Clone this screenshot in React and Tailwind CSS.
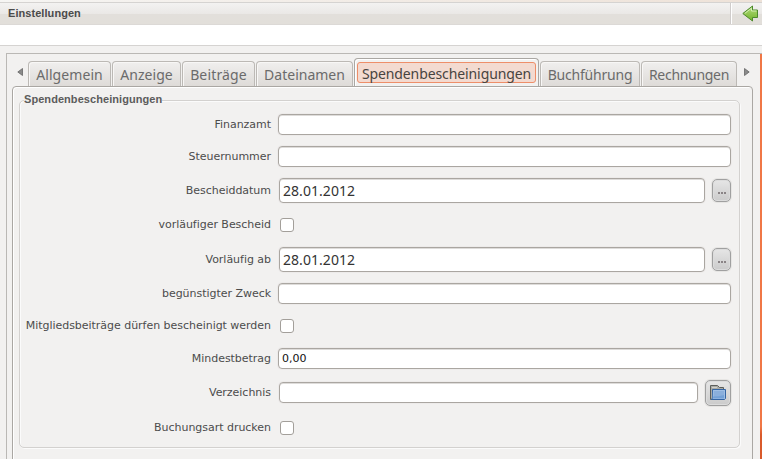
import React from "react";

const LABEL = "font-['DejaVu_Sans',sans-serif] text-[11px] leading-[14px] tracking-[-0.03px] text-[#4c4c4c] whitespace-nowrap";
const FIELD = "box-border rounded-[4px] border border-[#aaa6a1] bg-white shadow-[inset_0_1px_0_#dedcda,0_0_0_1px_#edebea] flex items-center";
const BUTTON = "box-border rounded-[5px] border border-[#a0a0a0] bg-linear-to-b from-[#e6e6e6] to-[#cbcbcb] shadow-[inset_0_0_0_1px_#dcdcdc,0_0_0_1px_#e6e5e3] flex items-center justify-center";

function Row({ label, className, children }) {
  return (
    <div className={"flex items-center " + className}>
      <div className={LABEL + " w-[251px] shrink-0 text-right"}>{label}</div>
      {children}
    </div>
  );
}

function TextField({ value }) {
  return (
    <div className={FIELD + " ml-[7px] h-[21px] w-[453px] pt-[1px] pl-[3px] font-['DejaVu_Sans',sans-serif] text-[11px] leading-[14px] text-[#111]"}>
      {value}
    </div>
  );
}

function DateField({ value }) {
  return (
    <>
      <div className={FIELD + " ml-[8px] h-[25px] w-[426px] pl-[3px] font-['Noto_Sans',sans-serif] text-[14px] text-[#333]"}>
        <span className="tracking-[0.05px]">{value}</span>
      </div>
      <button className={BUTTON + " ml-[7px] h-[23px] w-[19px]"}>
        <span className="flex gap-px pt-[5px]">
          <i className="size-[2px] bg-[#8a8486]" />
          <i className="size-[2px] bg-[#8a8486]" />
          <i className="size-[2px] bg-[#8a8486]" />
        </span>
      </button>
    </>
  );
}

function Check() {
  return <div className="ml-[9px] size-[14px] rounded-[3px] border border-[#a39f9a] bg-white" />;
}

function Tab({ className, text, children }) {
  return (
    <div
      className={
        "mr-[1px] flex h-[25px] shrink-0 items-center justify-center rounded-t-[4px] border border-b-0 border-[#bcb9b5] bg-linear-to-b from-[#f0efee] to-[#dedbd8] shadow-[inset_1px_1px_0_#f8f7f6] font-['Noto_Sans',sans-serif] text-[14px] whitespace-nowrap text-[#6b6b6b] " +
        className
      }
    >
      <span className={"mt-[1px] leading-[19px] " + text}>{children}</span>
    </div>
  );
}

function FolderIcon() {
  return (
    <svg width="18" height="18" viewBox="0 0 18 18">
      <path d="M1.5 15.5V1.5H8.5L10.5 3.5H14.5V6H3.5V15.5Z" fill="#a9aaa5" stroke="#5c5e5b" />
      <path d="M3 3.5H8" stroke="#cfd0cc" />
      <path d="M3.5 5.5H16.5V14.5L15.5 15.5H2.5L3.5 14Z" fill="#8aafdc" stroke="#3465a4" />
      <path d="M4.5 6.5H15.5V14.5H4Z" fill="none" stroke="#a8c5e8" strokeWidth=".7" />
      <path d="M4 12.5Q10 12.5 15 11V14.6H4Z" fill="#6497d4" opacity=".6" />
    </svg>
  );
}

export default function App() {
  return (
    <div className="h-[459px] w-[762px] overflow-hidden bg-[#f2f1f0]">
      <div className="h-[2px] bg-linear-to-r from-[#f6f5f3] to-[#eee2d8]" />
      <header className="flex h-[23px] items-stretch border-t border-b border-t-[#d5d3d1] border-b-[#dcd9d6] bg-[linear-gradient(#f3f2f1_0%,#eae8e6_52%,#e2dfdb_54%,#e2dfda_100%)]">
        <h1 className="flex-1 pl-[8px] font-['Liberation_Sans',sans-serif] text-[11px] leading-[21px] font-bold text-[#4b4b4b]">
          <span className="tracking-[0.06px]">Einstellungen</span>
        </h1>
        <div className="flex w-[32px] items-center border-l border-[#cfcccb] pl-[11px] shadow-[inset_1px_0_0_#fff]">
          <svg width="17" height="17" viewBox="0 0 17 17">
            <defs>
              <linearGradient id="leaf" x2="0" y2="1">
                <stop stopColor="#b3dc7c" />
                <stop offset="1" stopColor="#72b32b" />
              </linearGradient>
            </defs>
            <path d="M.8 8.5L10.5 1V5H15.5V12.5H10.5V16Z" fill="url(#leaf)" stroke="#4c8a2b" strokeLinejoin="round" />
            <path d="M2.8 8.4L9.5 3.2V6H14.5" fill="none" stroke="#d3edb1" />
          </svg>
        </div>
      </header>
      <div className="h-[20px] bg-white" />
      <div className="h-px bg-[#d5d3d1]" />
      <div className="h-[7px]" />
      <div className="ml-[6px] flex h-[406px] border-t border-l border-[#bab8b5]">
        <div className="w-[753px] shrink-0 pt-[5px]">
          <nav className="flex h-[27px] items-end">
            <div className="mr-[5px] mb-[10px] ml-[10px] w-[6px]">
              <svg width="6" height="8" viewBox="0 0 6 8"><path d="M5.5.5V7.5L.8 4Z" fill="#8b8b8b" stroke="#666" strokeWidth=".8" /></svg>
            </div>
            <Tab className="w-[83px]" text="tracking-[0.08px]">Allgemein</Tab>
            <Tab className="w-[69px]" text="tracking-[0.05px]">Anzeige</Tab>
            <Tab className="w-[73px]" text="tracking-[0.15px]">Beiträge</Tab>
            <Tab className="w-[97px]" text="">Dateinamen</Tab>
            <div className="relative z-10 mr-[1px] flex h-[28px] w-[185px] shrink-0 justify-center rounded-t-[4px] border border-b-0 border-[#aaa7a3] bg-[#f2f1f0] pt-[3px] shadow-[inset_1px_1px_0_#fff]">
              <div className="flex h-[21px] w-[179px] items-center justify-center rounded-[3px] border border-[#ee8e69] bg-[#f3dad0] pt-[1px] font-['Noto_Sans',sans-serif] text-[14px] leading-[19px] whitespace-nowrap text-[#484440]">
                <span className="tracking-[-0.1px]">Spendenbescheinigungen</span>
              </div>
            </div>
            <Tab className="w-[100px]" text="tracking-[-0.2px]">Buchführung</Tab>
            <Tab className="w-[96px]" text="tracking-[-0.3px]">Rechnungen</Tab>
            <div className="mb-[10px] ml-[6px]">
              <svg width="6" height="8" viewBox="0 0 6 8"><path d="M.5.5V7.5L5.2 4Z" fill="#8b8b8b" stroke="#666" strokeWidth=".8" /></svg>
            </div>
          </nav>
          <section className="ml-[5px] h-[400px] w-[741px] rounded-t-[4px] border border-[#aaa7a3] pt-[6px] pl-[6px] shadow-[inset_1px_1px_0_#fff]">
            <fieldset className="h-[356px] w-[721px]">
              <div className="flex h-[13px] items-center pl-[5px]">
                <h2 className="relative z-10 bg-[#f2f1f0] font-['Liberation_Sans',sans-serif] text-[11px] leading-[13px] font-bold text-[#5c5c5c]">
                  <span className="tracking-[0.06px]">Spendenbescheinigungen</span>
                </h2>
              </div>
              <div className="-mt-[6px] h-[348px] w-[721px] rounded-[5px] border border-[#d3d1cf] pt-[13px] shadow-[inset_1px_1px_0_#fbfbfb,1px_1px_0_#fbfbfb]">
                <Row label="Finanzamt" className="h-[21px]"><TextField /></Row>
                <Row label="Steuernummer" className="mt-[11px] h-[21px]"><TextField /></Row>
                <Row label="Bescheiddatum" className="mt-[11px] h-[25px]"><DateField value="28.01.2012" /></Row>
                <Row label="vorläufiger Bescheid" className="mt-[15px] h-[14px]"><Check /></Row>
                <Row label="Vorläufig ab" className="mt-[15px] h-[25px]"><DateField value="28.01.2012" /></Row>
                <Row label="begünstigter Zweck" className="mt-[11px] h-[21px]"><TextField /></Row>
                <Row label="Mitgliedsbeiträge dürfen bescheinigt werden" className="mt-[15px] h-[14px]"><Check /></Row>
                <Row label="Mindestbetrag" className="mt-[15px] h-[21px]"><TextField value="0,00" /></Row>
                <Row label="Verzeichnis" className="mt-[11px] h-[26px]">
                  <div className={FIELD + " mb-[1px] ml-[8px] h-[21px] w-[419px]"} />
                  <button className={BUTTON + " ml-[7px] size-[26px]"}><FolderIcon /></button>
                </Row>
                <Row label="Buchungsart drucken" className="mt-[15px] h-[14px]"><Check /></Row>
              </div>
            </fieldset>
          </section>
        </div>
        <div className="w-[2px] shrink-0 bg-[linear-gradient(#f07746_0%,#f07746_92%,#d95a2b_94%)]" />
      </div>
    </div>
  );
}
